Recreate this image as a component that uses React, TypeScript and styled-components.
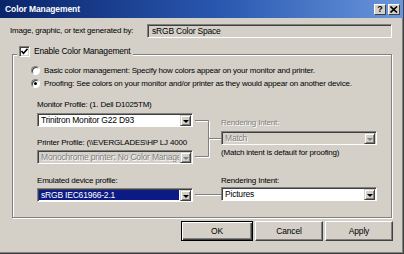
import React from "react";
import styled, { createGlobalStyle, css } from "styled-components";

const GlobalStyle = createGlobalStyle`
  html, body {
    margin: 0;
    padding: 0;
    background: #d4d0c8;
  }
  * {
    box-sizing: border-box;
  }
`;

const face = "#d4d0c8";
const shadow = "#808080";
const dark = "#404040";

const Window = styled.div`
  width: 404px;
  height: 254px;
  background: ${face};
  display: flex;
  flex-direction: column;
  font-family: "Liberation Sans", Arial, sans-serif;
  font-size: 8px;
  letter-spacing: -0.2px;
  color: #000;
  border-right: 1px solid ${dark};
  border-bottom: 1px solid ${dark};
  box-shadow: inset -1px -1px 0 ${shadow};
  overflow: hidden;
`;

const TitleBar = styled.div`
  height: 18px;
  flex-shrink: 0;
  display: flex;
  align-items: center;
  padding: 0 3px 0 5px;
  background: linear-gradient(90deg, #0a246a 0%, #2a58b0 55%, #6a96dc 100%);
`;

const Title = styled.div`
  flex: 1;
  color: #fff;
  font-weight: bold;
  font-size: 8.5px;
  letter-spacing: -0.1px;
`;

const CaptionButton = styled.div`
  width: 12px;
  height: 11px;
  margin-left: 2px;
  background: ${face};
  border-top: 1px solid #fff;
  border-left: 1px solid #fff;
  border-right: 1px solid ${dark};
  border-bottom: 1px solid ${dark};
  display: flex;
  align-items: center;
  justify-content: center;
  font-weight: bold;
  font-size: 9px;
  line-height: 1;
`;

const Content = styled.div`
  display: flex;
  flex-direction: column;
  padding: 6px 11px 0 10px;
`;

const GeneratedRow = styled.div`
  display: flex;
  align-items: center;
  height: 14px;
`;

const Label = styled.div<{ $disabled?: boolean }>`
  height: 10px;
  line-height: 10px;
  white-space: nowrap;
  ${(p) =>
    p.$disabled &&
    css`
      color: ${shadow};
      text-shadow: 1px 1px 0 #fff;
    `}
`;

const ReadOnlyField = styled.div`
  margin-left: auto;
  width: 245px;
  height: 14px;
  padding-left: 4px;
  display: flex;
  align-items: center;
  font-size: 8.5px;
  background: ${face};
  border-top: 1px solid ${shadow};
  border-left: 1px solid ${shadow};
  border-right: 1px solid #fff;
  border-bottom: 1px solid #fff;
  box-shadow: inset 1px 1px 0 ${dark};
`;

const Group = styled.div`
  position: relative;
  margin-top: 16px;
  border: 1px solid ${shadow};
  box-shadow: inset 1px 1px 0 #fff, 1px 1px 0 #fff;
  padding: 9px 0 15px 18px;
  width: 380px;
  margin-left: 2px;
`;

const Legend = styled.div`
  position: absolute;
  top: -10px;
  left: 4px;
  display: flex;
  align-items: center;
  gap: 4px;
  padding: 0 2px;
  background: ${face};
  height: 12px;
  font-size: 8.5px;
`;

const CheckBox = styled.div`
  width: 11px;
  height: 11px;
  flex-shrink: 0;
  background: #fff;
  border-top: 1px solid ${shadow};
  border-left: 1px solid ${shadow};
  border-right: 1px solid #fff;
  border-bottom: 1px solid #fff;
  box-shadow: inset 1px 1px 0 ${dark}, inset -1px -1px 0 ${face};
  display: flex;
  align-items: center;
  justify-content: center;
`;

const RadioRow = styled.div`
  display: flex;
  align-items: center;
  gap: 4px;
  height: 13px;
  white-space: nowrap;
`;

const Radio = styled.div<{ $checked?: boolean }>`
  width: 9px;
  height: 9px;
  flex-shrink: 0;
  border-radius: 50%;
  background: #fff;
  border: 1px solid;
  border-color: ${shadow} #fff #fff ${shadow};
  box-shadow: inset 1px 1px 0 ${dark};
  display: flex;
  align-items: center;
  justify-content: center;
  &::after {
    content: "";
    width: 3px;
    height: 3px;
    border-radius: 50%;
    background: ${(p) => (p.$checked ? "#000" : "transparent")};
  }
`;

const ProfileGrid = styled.div<{ $top: number }>`
  display: grid;
  grid-template-columns: 156px 28px 156px;
  margin-left: 6px;
  margin-top: ${(p) => p.$top}px;
`;

const Column = styled.div<{ $padTop?: number }>`
  display: flex;
  flex-direction: column;
  min-width: 0;
  padding-top: ${(p) => p.$padTop ?? 0}px;
`;

const Combo = styled.div<{ $disabled?: boolean; $gap?: number }>`
  margin-top: ${(p) => p.$gap ?? 3}px;
  height: 14px;
  display: flex;
  background: ${(p) => (p.$disabled ? face : "#fff")};
  border-top: 1px solid ${shadow};
  border-left: 1px solid ${shadow};
  border-right: 1px solid #fff;
  border-bottom: 1px solid #fff;
  box-shadow: inset 1px 1px 0 ${dark};
  padding: 1px 1px 0 1px;
`;

const ComboText = styled.div<{ $disabled?: boolean; $selected?: boolean }>`
  flex: 1;
  min-width: 0;
  overflow: hidden;
  white-space: nowrap;
  line-height: 11px;
  padding-left: 2px;
  margin: 0 1px 1px 0;
  font-size: 8.5px;
  ${(p) =>
    p.$selected &&
    css`
      background: #0c1a86;
      color: #fff;
    `}
  ${(p) =>
    p.$disabled &&
    css`
      color: ${shadow};
      text-shadow: 1px 1px 0 #fff;
    `}
`;

const ArrowButton = styled.div<{ $disabled?: boolean }>`
  width: 11px;
  height: 11px;
  flex-shrink: 0;
  background: ${face};
  border-top: 1px solid ${face};
  border-left: 1px solid ${face};
  border-right: 1px solid ${dark};
  border-bottom: 1px solid ${dark};
  box-shadow: inset 1px 1px 0 #fff, inset -1px -1px 0 ${shadow};
  display: flex;
  align-items: center;
  justify-content: center;
  &::after {
    content: "";
    border-left: 3px solid transparent;
    border-right: 3px solid transparent;
    border-top: 3px solid ${(p) => (p.$disabled ? shadow : "#000")};
    margin-top: 1px;
  }
`;

const Note = styled.div`
  margin-top: 3px;
  height: 10px;
  line-height: 10px;
  white-space: nowrap;
`;

const Gap = styled.div<{ $h: number }>`
  height: ${(p) => p.$h}px;
`;

const ButtonRow = styled.div`
  display: flex;
  justify-content: flex-end;
  gap: 2px;
  margin-top: 3px;
  margin-right: -1px;
`;

const PushButton = styled.div<{ $default?: boolean; $w: number }>`
  width: ${(p) => p.$w}px;
  height: 20px;
  display: flex;
  align-items: center;
  justify-content: center;
  font-size: 8.5px;
  background: ${face};
  border-top: 1px solid #fff;
  border-left: 1px solid #fff;
  border-right: 1px solid ${dark};
  border-bottom: 1px solid ${dark};
  box-shadow: inset -1px -1px 0 ${shadow};
  ${(p) =>
    p.$default &&
    css`
      outline: 1px solid #000;
      outline-offset: -1px;
      border-right-color: #000;
      border-bottom-color: #000;
      box-shadow: inset 1px 1px 0 #fff, inset -1px -1px 0 ${dark}, inset -2px -2px 0 ${shadow};
    `}
`;

const ComboBox = ({
  text,
  disabled,
  selected,
  gap,
}: {
  text: string;
  disabled?: boolean;
  selected?: boolean;
  gap?: number;
}) => (
  <Combo $disabled={disabled} $gap={gap}>
    <ComboText $disabled={disabled} $selected={selected}>
      {text}
    </ComboText>
    <ArrowButton $disabled={disabled} />
  </Combo>
);

// etched connector line: gray with white highlight one pixel below/right
const Etched = ({ d }: { d: string }) => (
  <>
    <path d={d} stroke="#fff" strokeWidth={1} fill="none" transform="translate(1,1)" />
    <path d={d} stroke="#808080" strokeWidth={1} fill="none" />
  </>
);

export default function App() {
  return (
    <>
      <GlobalStyle />
      <Window>
        <TitleBar>
          <Title>Color Management</Title>
          <CaptionButton>?</CaptionButton>
          <CaptionButton>
            <svg width="8" height="7" viewBox="0 0 8 7">
              <path d="M0.5 0.5 L7 6.5 M7 0.5 L0.5 6.5" stroke="#000" strokeWidth="1.6" />
            </svg>
          </CaptionButton>
        </TitleBar>
        <Content>
          <GeneratedRow>
            <Label>Image, graphic, or text generated by:</Label>
            <ReadOnlyField>sRGB Color Space</ReadOnlyField>
          </GeneratedRow>

          <Group>
            <Legend>
              <CheckBox>
                <svg width="7" height="7" viewBox="0 0 7 7">
                  <path d="M0.5 3 L2.5 5.2 L6.5 0.8" stroke="#000" strokeWidth="1.6" fill="none" />
                </svg>
              </CheckBox>
              <span>Enable Color Management</span>
            </Legend>

            <RadioRow>
              <Radio />
              <span>Basic color management: Specify how colors appear on your monitor and printer.</span>
            </RadioRow>
            <RadioRow>
              <Radio $checked />
              <span>
                Proofing: See colors on your monitor and/or printer as they would appear on another device.
              </span>
            </RadioRow>

            <ProfileGrid $top={10}>
              <Column>
                <Label>Monitor Profile: (1. Dell D1025TM)</Label>
                <ComboBox text="Trinitron Monitor G22 D93" />
                <Gap $h={11} />
                <Label>Printer Profile: (\\EVERGLADES\HP LJ 4000</Label>
                <ComboBox text="Monochrome printer: No Color Management" disabled gap={2} />
              </Column>
              <svg width="28" height="64" viewBox="0 0 28 64">
                <Etched d="M2 20.5 H15.5 V56.5 H2 M15.5 38.5 H28" />
              </svg>
              <Column $padTop={18}>
                <Label $disabled>Rendering Intent:</Label>
                <ComboBox text="Match" disabled />
                <Note>(Match intent is default for proofing)</Note>
              </Column>
            </ProfileGrid>

            <ProfileGrid $top={12}>
              <Column>
                <Label>Emulated device profile:</Label>
                <ComboBox text="sRGB IEC61966-2.1" selected gap={2} />
              </Column>
              <svg width="28" height="26" viewBox="0 0 28 26">
                <Etched d="M2 18.5 H28" />
              </svg>
              <Column>
                <Label>Rendering Intent:</Label>
                <ComboBox text="Pictures" gap={1} />
              </Column>
            </ProfileGrid>
          </Group>

          <ButtonRow>
            <PushButton $default $w={72}>
              OK
            </PushButton>
            <PushButton $w={68}>Cancel</PushButton>
            <PushButton $w={68}>Apply</PushButton>
          </ButtonRow>
        </Content>
      </Window>
    </>
  );
}
